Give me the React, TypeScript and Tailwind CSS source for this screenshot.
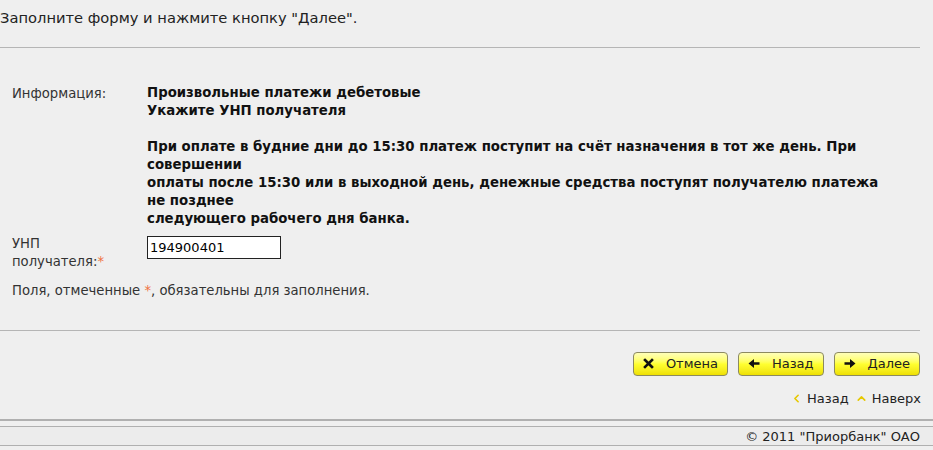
import { ChevronLeft, ChevronUp } from "lucide-react";

const font = { fontFamily: '"DejaVu Sans", Verdana, sans-serif' };

function CrossIcon() {
  return (
    <svg width="11" height="11" viewBox="0 0 11 11">
      <path d="M2 2 L9 9 M9 2 L2 9" stroke="#111" strokeWidth="2.6" strokeLinecap="square" />
    </svg>
  );
}

function Arrow({ dir }: { dir: "left" | "right" }) {
  return (
    <svg width="12" height="11" viewBox="0 0 12 11" className={dir === "right" ? "" : "-scale-x-100"}>
      <path d="M0.5 4.2 H6 V1 L11.5 5.5 L6 10 V6.8 H0.5 Z" fill="#111" />
    </svg>
  );
}

function YellowButton({ icon, label }: { icon: React.ReactNode; label: string }) {
  return (
    <button className="h-[24px] flex items-center gap-[12px] pl-[9px] pr-[9px] rounded-[4px] border border-[#8c8a60] text-[13px] text-[#222] bg-gradient-to-b from-[#ffffb8] via-[#ffff30] to-[#eee000]">
      {icon}
      {label}
    </button>
  );
}

export default function App() {
  return (
    <div className="w-[933px] h-[450px] bg-[#efefef] text-[#222] overflow-hidden" style={font}>
      <p className="text-[14.7px] pt-[7px] h-[47px]">Заполните форму и нажмите кнопку "Далее".</p>
      <div className="w-[920px] border-t border-[#b5b5b5]" />

      <div className="pl-[12px] pt-[36px] text-[13.2px]">
        <div className="flex">
          <div className="w-[135px] text-[#333]">Информация:</div>
          <div className="font-bold leading-[18px] text-[#111] text-[13.3px]">
            Произвольные платежи дебетовые
            <br />
            Укажите УНП получателя
            <br />
            <br />
            При оплате в будние дни до 15:30 платеж поступит на счёт назначения в тот же день. При
            <br />
            совершении
            <br />
            оплаты после 15:30 или в выходной день, денежные средства поступят получателю платежа
            <br />
            не позднее
            <br />
            следующего рабочего дня банка.
          </div>
        </div>

        <div className="flex mt-[7px]">
          <div className="w-[135px] leading-[18px] text-[#333]">
            УНП
            <br />
            получателя:<span className="text-[#f07040]">*</span>
          </div>
          <input
            readOnly
            value="194900401"
            className="w-[134px] h-[23px] mt-[1px] border border-[#222] bg-white px-[2px] text-[13px] text-black outline-none"
            style={font}
          />
        </div>

        <p className="mt-[10px] text-[#333]">
          Поля, отмеченные <span className="text-[#f07040]">*</span>, обязательны для заполнения.
        </p>
      </div>

      <div className="w-[920px] border-t border-[#b5b5b5] mt-[29px]" />

      <div className="w-[920px] flex justify-end gap-[10px] mt-[21px]">
        <YellowButton icon={<CrossIcon />} label="Отмена" />
        <YellowButton icon={<Arrow dir="left" />} label="Назад" />
        <YellowButton icon={<Arrow dir="right" />} label="Далее" />
      </div>

      <div className="w-[921px] flex justify-end items-center gap-[4px] mt-[13px] text-[13px] text-[#222]">
        <ChevronLeft size={13} strokeWidth={3} className="text-[#e6c800]" />
        <span>Назад</span>
        <ChevronUp size={13} strokeWidth={3} className="text-[#e6c800] ml-[2px]" />
        <span>Наверх</span>
      </div>

      <div className="mt-[11px] border-t-2 border-[#b0b0b0]" />
      <div className="mt-[5px] border-t border-[#b0b0b0] h-[19px] bg-[#ececec] flex justify-end items-center pr-[13px] text-[13px] text-[#222]">
        © 2011 "Приорбанк" ОАО
      </div>
      <div className="border-t border-[#b0b0b0]" />
    </div>
  );
}
